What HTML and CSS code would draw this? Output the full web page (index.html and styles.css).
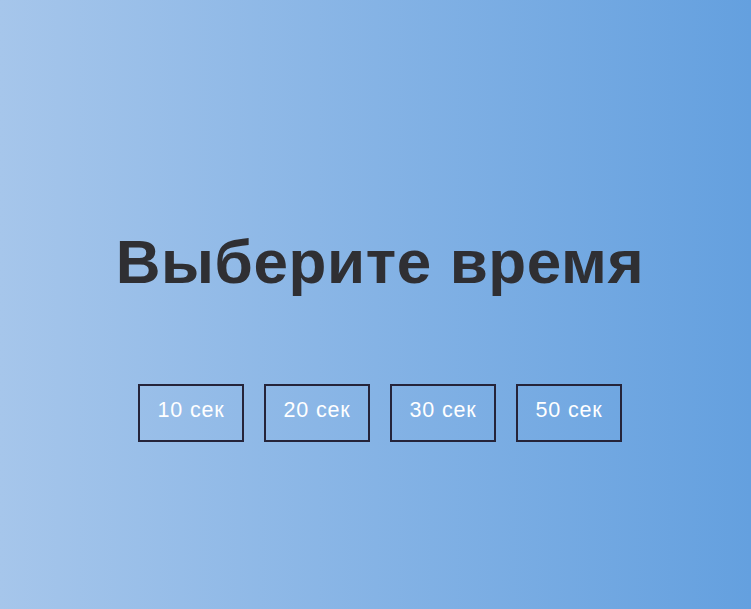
FILE: index.html
```html
<!DOCTYPE html>
<html lang="ru">
<head>
<meta charset="utf-8">
<title>Выберите время</title>
<link rel="stylesheet" href="styles.css">
</head>
<body>
<main class="screen">
  <h1 class="title">Выберите время</h1>
  <div class="options">
    <button class="option">10 сек</button>
    <button class="option">20 сек</button>
    <button class="option">30 сек</button>
    <button class="option">50 сек</button>
  </div>
</main>
</body>
</html>
```
FILE: styles.css
```css
html, body {
  margin: 0;
  height: 100%;
}
body {
  background: linear-gradient(to right, #a6c6eb, #64a0df);
  font-family: "Liberation Sans", Arial, sans-serif;
}
.screen {
  display: flex;
  flex-direction: column;
  align-items: center;
  padding-top: 225px;
  padding-left: 9px;
}
.title {
  margin: 0;
  font-size: 62px;
  line-height: 74px;
  font-weight: bold;
  letter-spacing: 0.6px;
  color: #2f2f33;
}
.options {
  display: flex;
  gap: 20px;
  margin-top: 85px;
}
.option {
  box-sizing: border-box;
  width: 106px;
  height: 58px;
  border: 2px solid #25243a;
  background: transparent;
  color: #ffffff;
  font-family: "Liberation Sans", Arial, sans-serif;
  font-size: 21.5px;
  letter-spacing: 0.8px;
  padding: 0 0 5px 0;
  cursor: pointer;
}
```
